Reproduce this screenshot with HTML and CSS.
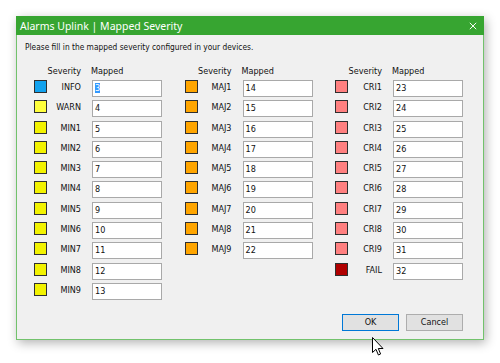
FILE: index.html
```html
<!DOCTYPE html>
<html>
<head>
  <title>Alarms Uplink | Mapped Severity</title>
  <link rel="stylesheet" href="styles.css">
</head>
<body>
  <div class="window">
    <div class="titlebar">
      <span class="title">Alarms Uplink | Mapped Severity</span>
      <svg class="close" width="10" height="10" viewBox="0 0 10 10">
        <path d="M1 1 L9 9 M9 1 L1 9" stroke="#fff" stroke-width="1.2" fill="none" />
      </svg>
    </div>

    <div class="content">
      <p class="intro">Please fill in the mapped severity configured in your devices.</p>

      <div class="columns">
        <div class="column">
          <div class="row head"><span class="swatch none"></span><span class="label">Severity</span><span class="mapped">Mapped</span></div>
          <div class="row"><span class="swatch info"></span><span class="label">INFO</span><div class="field"><span class="selected">3</span></div></div>
          <div class="row"><span class="swatch warn"></span><span class="label">WARN</span><div class="field">4</div></div>
          <div class="row"><span class="swatch minor"></span><span class="label">MIN1</span><div class="field">5</div></div>
          <div class="row"><span class="swatch minor"></span><span class="label">MIN2</span><div class="field">6</div></div>
          <div class="row"><span class="swatch minor"></span><span class="label">MIN3</span><div class="field">7</div></div>
          <div class="row"><span class="swatch minor"></span><span class="label">MIN4</span><div class="field">8</div></div>
          <div class="row"><span class="swatch minor"></span><span class="label">MIN5</span><div class="field">9</div></div>
          <div class="row"><span class="swatch minor"></span><span class="label">MIN6</span><div class="field">10</div></div>
          <div class="row"><span class="swatch minor"></span><span class="label">MIN7</span><div class="field">11</div></div>
          <div class="row"><span class="swatch minor"></span><span class="label">MIN8</span><div class="field">12</div></div>
          <div class="row"><span class="swatch minor"></span><span class="label">MIN9</span><div class="field">13</div></div>
        </div>

        <div class="column">
          <div class="row head"><span class="swatch none"></span><span class="label">Severity</span><span class="mapped">Mapped</span></div>
          <div class="row"><span class="swatch major"></span><span class="label">MAJ1</span><div class="field">14</div></div>
          <div class="row"><span class="swatch major"></span><span class="label">MAJ2</span><div class="field">15</div></div>
          <div class="row"><span class="swatch major"></span><span class="label">MAJ3</span><div class="field">16</div></div>
          <div class="row"><span class="swatch major"></span><span class="label">MAJ4</span><div class="field">17</div></div>
          <div class="row"><span class="swatch major"></span><span class="label">MAJ5</span><div class="field">18</div></div>
          <div class="row"><span class="swatch major"></span><span class="label">MAJ6</span><div class="field">19</div></div>
          <div class="row"><span class="swatch major"></span><span class="label">MAJ7</span><div class="field">20</div></div>
          <div class="row"><span class="swatch major"></span><span class="label">MAJ8</span><div class="field">21</div></div>
          <div class="row"><span class="swatch major"></span><span class="label">MAJ9</span><div class="field">22</div></div>
        </div>

        <div class="column">
          <div class="row head"><span class="swatch none"></span><span class="label">Severity</span><span class="mapped">Mapped</span></div>
          <div class="row"><span class="swatch critical"></span><span class="label">CRI1</span><div class="field">23</div></div>
          <div class="row"><span class="swatch critical"></span><span class="label">CRI2</span><div class="field">24</div></div>
          <div class="row"><span class="swatch critical"></span><span class="label">CRI3</span><div class="field">25</div></div>
          <div class="row"><span class="swatch critical"></span><span class="label">CRI4</span><div class="field">26</div></div>
          <div class="row"><span class="swatch critical"></span><span class="label">CRI5</span><div class="field">27</div></div>
          <div class="row"><span class="swatch critical"></span><span class="label">CRI6</span><div class="field">28</div></div>
          <div class="row"><span class="swatch critical"></span><span class="label">CRI7</span><div class="field">29</div></div>
          <div class="row"><span class="swatch critical"></span><span class="label">CRI8</span><div class="field">30</div></div>
          <div class="row"><span class="swatch critical"></span><span class="label">CRI9</span><div class="field">31</div></div>
          <div class="row"><span class="swatch fail"></span><span class="label">FAIL</span><div class="field">32</div></div>
        </div>
      </div>

      <div class="buttons">
        <button class="default">OK</button>
        <button>Cancel</button>
      </div>
    </div>

    <svg class="cursor" width="13" height="20" viewBox="0 0 13 20">
      <path d="M0.5 0.5 L0.5 15.5 L4 12.3 L6.4 18 L8.6 17 L6.3 11.5 L11 11.5 Z" fill="#fff" stroke="#000" stroke-width="1" stroke-linejoin="round" />
    </svg>
  </div>
</body>
</html>
```

FILE: styles.css
```css
body {
  margin: 0;
  padding: 16px;
  background: #fff;
  font-family: "DejaVu Sans Condensed", "DejaVu Sans", sans-serif;
  font-size: 9px;
  color: #111;
}

.window {
  position: relative;
  width: 468px;
  height: 324px;
  box-sizing: border-box;
  border: 1px solid #72c26c;
  background: #f0f0f0;
  box-shadow: 2px 3px 10px rgba(0, 0, 0, 0.3);
}

.titlebar {
  display: flex;
  align-items: center;
  justify-content: space-between;
  height: 18px;
  margin: -1px -1px 0;
  padding: 1px 7px 0 4px;
  background: #37a531;
  color: #fff;
}

.title {
  font-family: "Noto Sans", "Open Sans", sans-serif;
  font-size: 10.5px;
}

.close {
  display: block;
  width: 8px;
  height: 8px;
}

.content {
  padding: 6px 20px 0 8px;
}

.intro {
  margin: 0;
  height: 12px;
  font-size: 8.3px;
  line-height: 12px;
}

.columns {
  display: grid;
  grid-template-columns: 150.5px 150.5px 150px;
  margin: 11px 0 0 9px;
}

.column {
  display: flex;
  flex-direction: column;
  gap: 3.3px;
}

.row {
  display: flex;
  align-items: flex-start;
  height: 17px;
}

.row.head {
  height: 14px;
  margin-bottom: -1.3px;
  align-items: center;
}

.swatch {
  width: 13px;
  height: 13px;
  box-sizing: border-box;
  border: 1px solid #2f2f2f;
}

.swatch.none {
  border: none;
}

.info { background: #12a2ee; }
.warn { background: #ffff3c; }
.minor { background: #f2f200; }
.major { background: #ffa500; }
.critical { background: #ff8080; }
.fail { background: #b00000; }

.label {
  width: 34px;
  margin-right: 11px;
  text-align: right;
  line-height: 14px;
}

.row.head .label {
  width: 40px;
  margin-left: -6px;
  margin-right: 10px;
}

.field {
  width: 70px;
  height: 17px;
  box-sizing: border-box;
  padding: 0 2px;
  border: 1px solid #a9a9a9;
  background: #fff;
  line-height: 15px;
}

.selected {
  background: #3399ff;
  color: #fff;
}

.buttons {
  display: flex;
  justify-content: flex-end;
  gap: 7px;
  margin-top: 14px;
}

button {
  width: 57px;
  height: 17px;
  padding: 0;
  border: 1px solid #adadad;
  background: #e1e1e1;
  font-family: inherit;
  font-size: 9px;
  color: #111;
}

button.default {
  border-color: #0078d7;
}

.cursor {
  position: absolute;
  left: 355px;
  top: 320px;
}
```
